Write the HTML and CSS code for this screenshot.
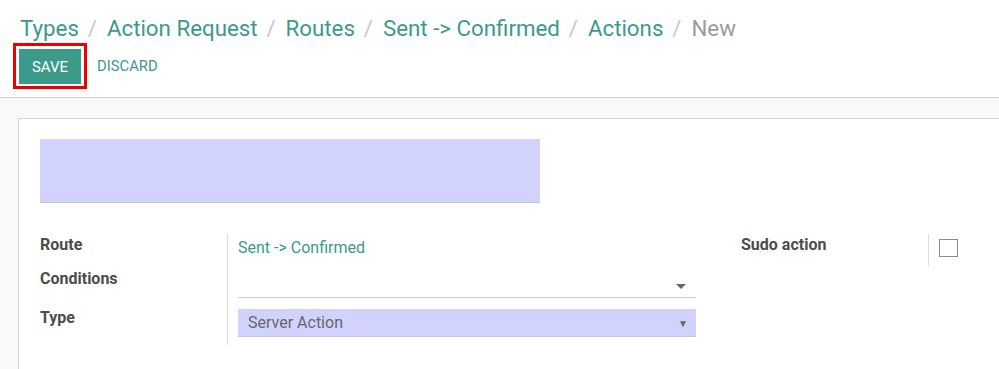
FILE: index.html
```html
<!DOCTYPE html>
<html lang="en">
<head>
<meta charset="utf-8">
<title>New Action</title>
<link rel="stylesheet" href="styles.css">
</head>
<body>
<div class="control-panel">
  <ol class="breadcrumb">
    <li class="crumb"><a>Types</a></li>
    <li class="crumb"><a>Action Request</a></li>
    <li class="crumb"><a>Routes</a></li>
    <li class="crumb"><a>Sent -&gt; Confirmed</a></li>
    <li class="crumb"><a>Actions</a></li>
    <li class="crumb active">New</li>
  </ol>
  <div class="buttons">
    <div class="highlight"><button class="btn-save">SAVE</button></div>
    <button class="btn-discard">DISCARD</button>
  </div>
</div>
<div class="content">
  <div class="sheet">
    <div class="name-field"></div>
    <div class="groups">
      <div class="group group-left">
        <div class="row row-route">
          <div class="label">Route</div>
          <div class="field"><span class="link">Sent -&gt; Confirmed</span></div>
        </div>
        <div class="row row-cond">
          <div class="label">Conditions</div>
          <div class="field"><div class="m2m-input"><span class="caret"></span></div></div>
        </div>
        <div class="row row-type">
          <div class="label">Type</div>
          <div class="field"><div class="select">Server Action<span class="sel-arrow">▼</span></div></div>
        </div>
      </div>
      <div class="group group-right">
        <div class="row row-sudo">
          <div class="label">Sudo action</div>
          <div class="field"><span class="checkbox"></span></div>
        </div>
      </div>
    </div>
  </div>
</div>
</body>
</html>
```
FILE: styles.css
```css
html, body {
  margin: 0;
  padding: 0;
  background: #f9f9f9;
  font-family: Roboto, "Noto Sans", sans-serif;
  color: #4c4c4c;
  overflow: hidden;
}

.control-panel {
  background: #fff;
  border-bottom: 1px solid #cfcfcf;
  padding: 13px 0 8px 0;
  height: 76px;
}

.breadcrumb {
  list-style: none;
  margin: 0;
  padding: 0 0 0 20px;
  display: flex;
  font-size: 22.3px;
  line-height: 30px;
  height: 30px;
}

.crumb a {
  color: #3b9a8a;
  text-decoration: none;
}

.crumb + .crumb::before {
  content: "/";
  color: #c8c8c8;
  padding: 0 10px 0 8.8px;
}

.crumb.active {
  color: #9b9b9b;
}

.buttons {
  display: flex;
  align-items: center;
  margin-left: 13px;
  height: 46px;
}

.highlight {
  border: 3px solid #ee0000;
  padding: 3px 3px 2px 3px;
  display: flex;
}

.btn-save {
  background: #3b9a8a;
  color: #fff;
  border: 0;
  font-family: Roboto, sans-serif;
  font-size: 15px;
  height: 35px;
  width: 62px;
  padding: 0;
  border-radius: 0;
}

.btn-discard {
  background: none;
  border: 0;
  color: #3b9a8a;
  font-family: Roboto, sans-serif;
  font-size: 14.8px;
  padding: 0;
  margin-left: 10px;
  margin-top: -1px;
}

.content {
  padding: 20px 0 0 18px;
}

.sheet {
  background: #fff;
  border-top: 1px solid #d6d6d6;
  border-left: 1px solid #d6d6d6;
  padding: 20px 0 0 21px;
  height: 230px;
}

.name-field {
  width: 500px;
  height: 63px;
  background: #d2d2ff;
  border-bottom: 1px solid #c8c8c8;
}

.groups {
  display: flex;
  margin-top: 31px;
  gap: 45px;
}

.group {
  display: flex;
  flex-direction: column;
}

.group-left {
  width: 656px;
}

.row {
  display: flex;
}

.label {
  width: 188px;
  flex: none;
  border-right: 1px solid #dcdcdc;
  font-weight: bold;
  font-size: 16px;
  line-height: 20px;
  color: #4c4c4c;
  box-sizing: border-box;
}

.field {
  flex: 1;
  padding-left: 10px;
  font-size: 16px;
  line-height: 20px;
}

.row-route { height: 33px; }
.row-route .label { padding-top: 1px; }
.row-route .field { padding-top: 4px; }

.row-cond { height: 39px; }
.row-cond .label { padding-top: 2px; }
.row-cond .field { padding-top: 4px; }

.row-type { height: 39px; }
.row-type .label { padding-top: 2px; }
.row-type .field { padding-top: 3px; }

.link {
  color: #3b9a8a;
}

.m2m-input {
  height: 26px;
  border-bottom: 1px solid #c8c8c8;
  position: relative;
}

.caret {
  position: absolute;
  right: 10px;
  top: 13px;
  width: 0;
  height: 0;
  border-top: 5px solid #666;
  border-left: 5px solid transparent;
  border-right: 5px solid transparent;
}

.select {
  height: 27px;
  background: #d2d2ff;
  border-bottom: 1px solid #c8c8c8;
  padding-left: 10px;
  line-height: 27px;
  color: #666;
  display: flex;
  justify-content: space-between;
}

.sel-arrow {
  font-size: 10px;
  color: #666;
  padding-right: 8px;
  padding-top: 1px;
}

.group-right .label {
  width: 188px;
}

.row-sudo { height: 32px; }
.row-sudo .label { padding-top: 1px; }
.row-sudo .field { padding-top: 5px; }

.checkbox {
  display: block;
  width: 17px;
  height: 16px;
  border: 1px solid #8a8a8a;
}
```
